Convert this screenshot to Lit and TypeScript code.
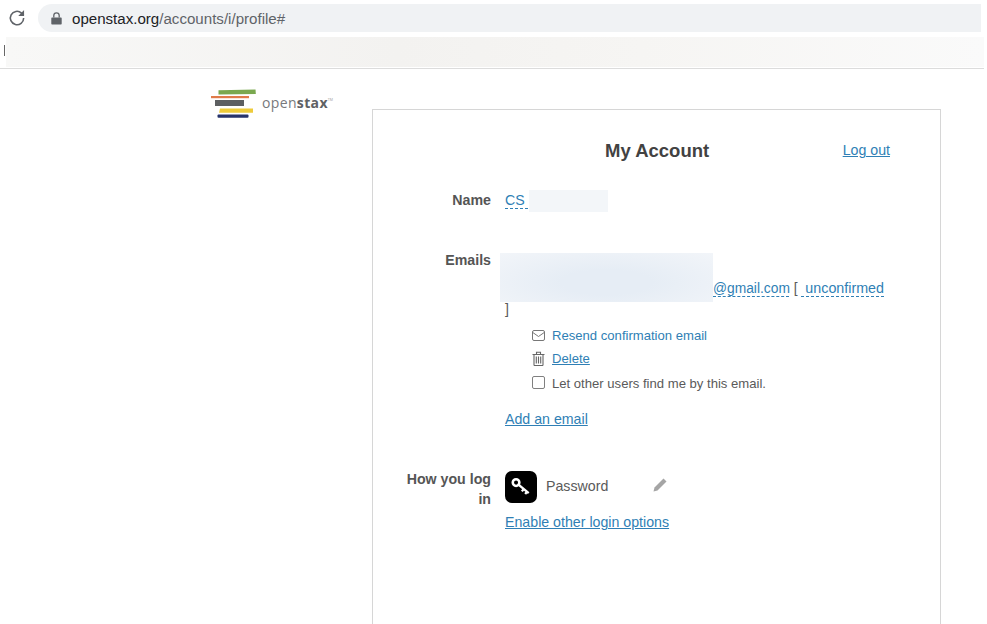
import { LitElement, html, css } from "lit";
import { customElement } from "lit/decorators.js";

@customElement("app-root")
export class AppRoot extends LitElement {
  static styles = css`
    :host {
      display: block;
      width: 987px;
      height: 624px;
      overflow: hidden;
      background: #fff;
      font-family: "Liberation Sans", Arial, sans-serif;
      color: #5a5a5a;
      font-size: 14.2px;
    }
    a {
      color: #2f7fb5;
    }
    .chrome {
      height: 36px;
      display: flex;
      align-items: flex-start;
      padding: 4px 6px 0 7px;
      box-sizing: border-box;
      gap: 11px;
    }
    .reload {
      margin-top: 4px;
      flex: none;
    }
    .url {
      flex: 1;
      height: 28px;
      border-radius: 14px 0 0 14px;
      background: #f0f2f4;
      display: flex;
      align-items: center;
      padding-left: 13px;
      gap: 10px;
      font-size: 15.1px;
      color: #5f6368;
    }
    .url b {
      font-weight: 400;
      color: #202124;
    }
    .bar {
      height: 32px;
      margin-right: 3px;
      border-bottom: 1px solid #dcdcdc;
      display: flex;
      align-items: center;
      background: #fff;
    }
    .caret {
      width: 1px;
      height: 11px;
      background: #666;
      margin: 0 1px 3px 4px;
      flex: none;
    }
    .blur {
      flex: 1;
      height: 30px;
      background: linear-gradient(90deg, #f8f8f7, #f3f2f0 40%, #f6f5f3 65%, #fafafa);
      margin-bottom: 1px;
    }
    .page {
      display: flex;
      align-items: flex-start;
    }
    .logo {
      flex: none;
      width: 372px;
      box-sizing: border-box;
      padding: 20px 0 0 211px;
      display: flex;
      align-items: flex-start;
      gap: 6px;
    }
    .wordmark {
      font-family: "Open Sans", "Liberation Sans", sans-serif;
      font-size: 14px;
      line-height: 20px;
      color: #77797c;
      letter-spacing: 0.35px;
      margin-top: 4px;
    }
    .wordmark b {
      font-weight: 700;
      color: #5f6164;
    }
    .wordmark sup {
      font-size: 3.5px;
      vertical-align: 7px;
      letter-spacing: 0;
      line-height: 0;
      color: #9a9a9a;
    }
    .card {
      width: 569px;
      height: 560px;
      margin-top: 40px;
      box-sizing: border-box;
      border: 1px solid #d6d6d6;
      padding-top: 29px;
    }
    .head {
      display: grid;
      grid-template-columns: 1fr auto;
      height: 51px;
      padding-right: 50px;
    }
    h1 {
      margin: 0;
      font-size: 18.5px;
      font-weight: 700;
      color: #424242;
      padding-left: 232px;
      line-height: 24px;
    }
    .head a {
      line-height: 22px;
    }
    .row {
      display: grid;
      grid-template-columns: 118px 1fr;
      gap: 14px;
      line-height: 20px;
    }
    .label {
      font-weight: 700;
      text-align: right;
      color: #555;
      padding-left: 30px;
    }
    .name {
      height: 38px;
    }
    .name .value {
      display: flex;
      align-items: flex-start;
    }
    .dash {
      text-decoration: underline dashed #2f7fb5 1px;
      text-underline-offset: 3px;
    }
    .smudge {
      background: #f3f6f9;
      width: 79px;
      height: 22px;
    }
    .emails {
      margin-top: 22px;
    }
    .email-line {
      display: flex;
      align-items: flex-end;
      margin: 3px 0 0 -5px;
      white-space: pre;
      height: 49px;
    }
    .email-text {
      margin-bottom: 3px;
      font-size: 13.8px;
    }
    .email-text .status {
      font-size: 14.3px;
    }
    .smudge-lg {
      width: 213px;
      height: 49px;
      background: radial-gradient(ellipse at 50% 60%, #e6edf5 30%, #f2f5f9 100%);
      flex: none;
    }
    .bracket {
      height: 22px;
      line-height: 14px;
    }
    .actions {
      padding-left: 27px;
      display: flex;
      flex-direction: column;
      font-size: 13.1px;
    }
    .action {
      display: flex;
      align-items: center;
      gap: 7px;
      height: 23px;
    }
    .action svg {
      flex: none;
    }
    .action a.plain {
      text-decoration: none;
    }
    .check {
      width: 11px;
      height: 11px;
      border: 1px solid #808080;
      border-radius: 2px;
      background: #fff;
      flex: none;
      margin-bottom: 3px;
    }
    .action.find {
      height: 28px;
    }
    .add {
      display: block;
      margin-top: 11px;
    }
    .login {
      margin-top: 40px;
    }
    .method {
      display: flex;
      align-items: center;
      height: 32px;
      margin-top: 2px;
    }
    .key {
      width: 32px;
      height: 32px;
      border-radius: 7px;
      background: #000;
      display: flex;
      align-items: center;
      justify-content: center;
      flex: none;
    }
    .method span {
      margin: 0 0 2px 9px;
      width: 107px;
    }
    .pencil {
      margin-bottom: 6px;
    }
    .enable {
      display: block;
      margin-top: 9px;
    }
  `;

  render() {
    return html`
      <div class="chrome">
        <svg class="reload" width="20" height="20" viewBox="0 0 24 24" fill="none" stroke="#5f6368" stroke-width="1.9">
          <path d="M20 12a8 8 0 1 1-2.600-5.900L20 8.500" />
          <path d="M20.500 2.500v7h-7" fill="#5f6368" stroke="none" />
        </svg>
        <div class="url">
          <svg width="11" height="13" viewBox="0 0 11 13">
            <path d="M1 5.500h9a.7.7 0 0 1 .7.7v5.600a.7.7 0 0 1-.7.7H1a.7.7 0 0 1-.7-.7V6.200a.7.7 0 0 1 .7-.7z" fill="#5f6368" />
            <path d="M2.800 5.500V3.600a2.700 2.700 0 0 1 5.400 0v1.900" fill="none" stroke="#5f6368" stroke-width="1.300" />
          </svg>
          <div><b>openstax.org</b>/accounts/i/profile#</div>
        </div>
      </div>
      <div class="bar"><div class="caret"></div><div class="blur"></div></div>
      <div class="page">
        <div class="logo">
          <svg width="45" height="30" viewBox="0 0 45 30">
            <path d="M7.500 1.200 44.500 .5l.3 4.500-37.300.5z" fill="#7aa84f" />
            <rect x="0" y="7" width="38" height="2.200" fill="#e07b4a" />
            <rect x="4" y="11" width="29" height="6" fill="#5d5f61" />
            <path d="M9 19.500h33v4.200H8z" fill="#eecb3a" />
            <rect x="6.500" y="25.500" width="31" height="3.300" rx="1" fill="#26336b" />
          </svg>
          <div class="wordmark">open<b>stax</b><sup>TM</sup></div>
        </div>
        <div class="card">
          <div class="head">
            <h1>My Account</h1>
            <a href="#">Log out</a>
          </div>
          <div class="row name">
            <div class="label">Name</div>
            <div class="value"><a class="dash" href="#">CS&nbsp;</a><div class="smudge"></div></div>
          </div>
          <div class="row emails">
            <div class="label">Emails</div>
            <div>
              <div class="email-line"><div class="smudge-lg"></div><div class="email-text"><a class="dash" href="#">@gmail.com</a> [ <a class="dash status" href="#"> unconfirmed</a></div></div>
              <div class="bracket">]</div>
              <div class="actions">
                <div class="action">
                  <svg width="13" height="11" viewBox="0 0 13 11" fill="none" stroke="#777" stroke-width="1">
                    <rect x=".5" y=".5" width="12" height="10" rx="1.500" />
                    <path d="M.8 2.500 6.500 6.500l5.700-4" />
                  </svg>
                  <a class="plain" href="#">Resend confirmation email</a>
                </div>
                <div class="action">
                  <svg width="13" height="15" viewBox="0 0 13 15" fill="none" stroke="#666" stroke-width="1.100">
                    <path d="M.5 3.500h12M4.500 3V1.200h4V3" />
                    <path d="M2 3.500v10.300a.7.7 0 0 0 .7.7h7.600a.7.7 0 0 0 .7-.7V3.500" />
                    <path d="M4.300 5.500v7M6.500 5.500v7M8.700 5.500v7" />
                  </svg>
                  <a href="#">Delete</a>
                </div>
                <div class="action find">
                  <div class="check"></div>
                  <div>Let other users find me by this email.</div>
                </div>
              </div>
              <a class="add" href="#">Add an email</a>
            </div>
          </div>
          <div class="row login">
            <div class="label">How you log in</div>
            <div>
              <div class="method">
                <div class="key">
                  <svg width="22" height="22" viewBox="0 0 20 20" fill="none" stroke="#fff">
                    <circle cx="5.500" cy="6" r="3" stroke-width="2.300" />
                    <path d="m8 8 9 7.500M12.500 11.800l-1.700 2.200M15.500 14.200l-1.700 2.200" stroke-width="2.100" />
                  </svg>
                </div>
                <span>Password</span>
                <svg class="pencil" width="15" height="15" viewBox="0 0 15 15">
                  <path d="M.5 14.500 1.500 10.500 10.500 1.500l3 3-9 9z" fill="#a5a5a5" />
                </svg>
              </div>
              <a class="enable" href="#">Enable other login options</a>
            </div>
          </div>
        </div>
      </div>
    `;
  }
}
